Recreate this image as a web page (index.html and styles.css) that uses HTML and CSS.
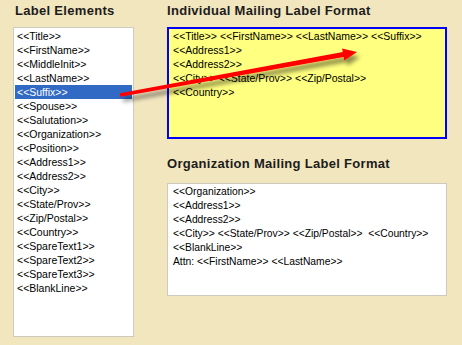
FILE: index.html
```html
<!DOCTYPE html>
<html lang="en">
<head>
    <meta charset="UTF-8">
    <title>Mailing Label Format</title>
    <link rel="stylesheet" href="styles.css">
</head>
<body>
    <div class="page">
        <div class="elements">
            <h3 class="section-title indent">Label Elements</h3>
            <ul class="element-list">
                <li>&lt;&lt;Title&gt;&gt;</li>
                <li>&lt;&lt;FirstName&gt;&gt;</li>
                <li>&lt;&lt;MiddleInit&gt;&gt;</li>
                <li>&lt;&lt;LastName&gt;&gt;</li>
                <li class="selected">&lt;&lt;Suffix&gt;&gt;</li>
                <li>&lt;&lt;Spouse&gt;&gt;</li>
                <li>&lt;&lt;Salutation&gt;&gt;</li>
                <li>&lt;&lt;Organization&gt;&gt;</li>
                <li>&lt;&lt;Position&gt;&gt;</li>
                <li>&lt;&lt;Address1&gt;&gt;</li>
                <li>&lt;&lt;Address2&gt;&gt;</li>
                <li>&lt;&lt;City&gt;&gt;</li>
                <li>&lt;&lt;State/Prov&gt;&gt;</li>
                <li>&lt;&lt;Zip/Postal&gt;&gt;</li>
                <li>&lt;&lt;Country&gt;&gt;</li>
                <li>&lt;&lt;SpareText1&gt;&gt;</li>
                <li>&lt;&lt;SpareText2&gt;&gt;</li>
                <li>&lt;&lt;SpareText3&gt;&gt;</li>
                <li>&lt;&lt;BlankLine&gt;&gt;</li>
            </ul>
        </div>
        <div class="formats">
            <div class="format">
                <h3 class="section-title">Individual Mailing Label Format</h3>
                <div class="label-box active">
                    <div class="line">&lt;&lt;Title&gt;&gt; &lt;&lt;FirstName&gt;&gt; &lt;&lt;LastName&gt;&gt; &lt;&lt;Suffix&gt;&gt;</div>
                    <div class="line">&lt;&lt;Address1&gt;&gt;</div>
                    <div class="line">&lt;&lt;Address2&gt;&gt;</div>
                    <div class="line">&lt;&lt;City&gt;&gt; &lt;&lt;State/Prov&gt;&gt; &lt;&lt;Zip/Postal&gt;&gt;</div>
                    <div class="line">&lt;&lt;Country&gt;&gt;</div>
                </div>
            </div>
            <div class="format org">
                <h3 class="section-title">Organization Mailing Label Format</h3>
                <div class="label-box">
                    <div class="line">&lt;&lt;Organization&gt;&gt;</div>
                    <div class="line">&lt;&lt;Address1&gt;&gt;</div>
                    <div class="line">&lt;&lt;Address2&gt;&gt;</div>
                    <div class="line">&lt;&lt;City&gt;&gt; &lt;&lt;State/Prov&gt;&gt; &lt;&lt;Zip/Postal&gt;&gt;  &lt;&lt;Country&gt;&gt;</div>
                    <div class="line">&lt;&lt;BlankLine&gt;&gt;</div>
                    <div class="line">Attn: &lt;&lt;FirstName&gt;&gt; &lt;&lt;LastName&gt;&gt;</div>
                </div>
            </div>
        </div>
    </div>

    <!-- drag arrow from the selected element into the label -->
    <svg class="drag-arrow" width="462" height="345" viewBox="0 0 462 345">
        <defs>
            <filter id="shadow" x="-10%" y="-50%" width="130%" height="200%">
                <feDropShadow dx="3" dy="5" stdDeviation="2" flood-color="#000" flood-opacity="0.45"/>
            </filter>
        </defs>
        <path d="M119.7,93.3 L342.8,52 L342.1,48.6 L357,52 L344.3,60.4 L343.6,57 L120.3,96.7 Z" fill="#ff0000" filter="url(#shadow)"/>
    </svg>
</body>
</html>
```

FILE: styles.css
```css
body {
    margin: 0;
    background: #f2e6bf;
    font-family: 'Liberation Sans', Arial, sans-serif;
    color: #000;
}
.page {
    display: flex;
    gap: 33px;
    padding: 3px 0 0 13px;
}
.section-title {
    margin: 0 0 8px;
    font-size: 13px;
    line-height: 16px;
    font-weight: bold;
    letter-spacing: 0.3px;
    color: #1c1c1c;
}
.indent {
    padding-left: 2px;
}
.element-list {
    list-style: none;
    margin: 0;
    padding: 1px;
    width: 121px;
    height: 310px;
    box-sizing: border-box;
    background: white;
    border: 1px solid #cfcac0;
}
.element-list li {
    height: 14px;
    line-height: 14px;
    font-size: 10.5px;
    padding-left: 2px;
    white-space: nowrap;
}
.element-list li.selected {
    background: #316ac5;
    color: white;
}
.formats {
    display: flex;
    flex-direction: column;
}
.org {
    margin-top: 17px;
}
.org .section-title {
    margin-bottom: 11px;
}
.label-box {
    width: 280px;
    height: 113px;
    box-sizing: border-box;
    background: white;
    border: 1px solid #cfcac0;
    padding: 1px 5px;
}
.label-box.active {
    height: 112px;
    background: #ffff80;
    border: 2px solid #0000ff;
    padding: 0 4px;
}
.line {
    height: 14px;
    line-height: 14px;
    font-size: 10.5px;
    white-space: pre;
}
.org .line {
    font-size: 10.3px;
}
.drag-arrow {
    position: absolute;
    top: 0;
    left: 0;
    pointer-events: none;
}
```
